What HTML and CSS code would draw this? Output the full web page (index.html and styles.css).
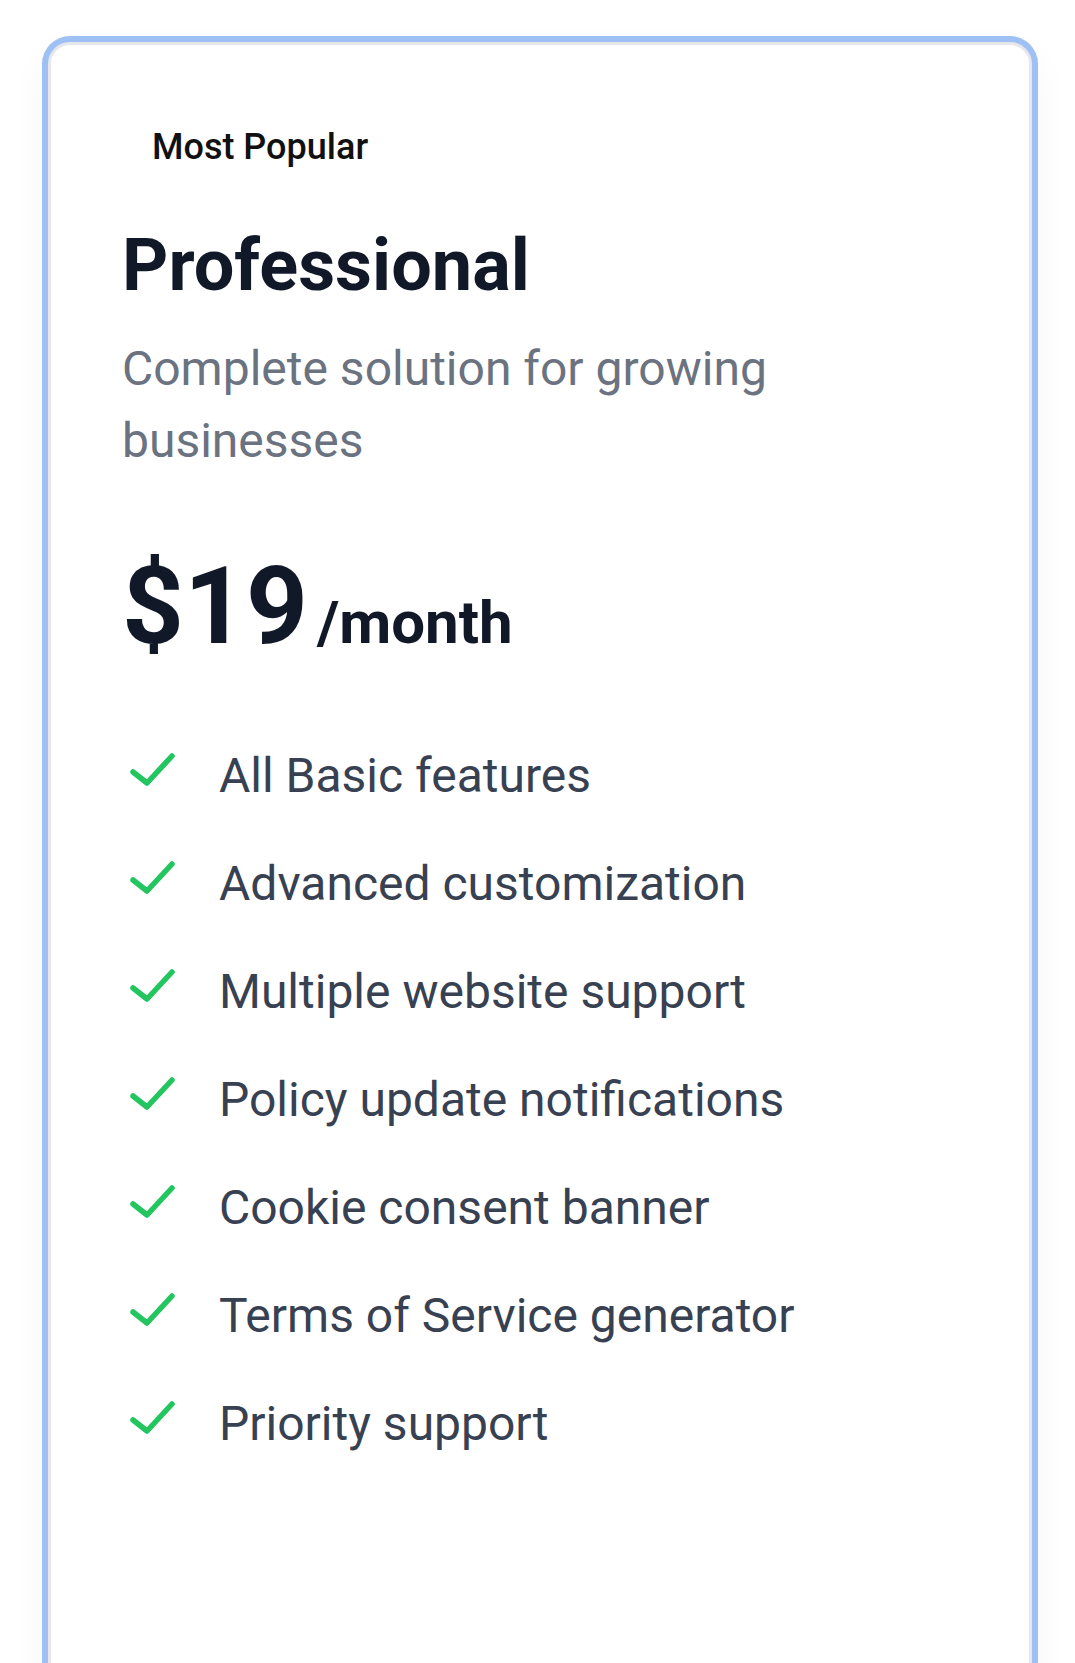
FILE: index.html
```html
<!DOCTYPE html>
<html lang="en">
<head>
<meta charset="utf-8">
<title>Professional plan</title>
<link rel="stylesheet" href="styles.css">
</head>
<body>
<main class="page">
  <section class="card">
    <span class="badge">Most Popular</span>
    <h2 class="plan-name">Professional</h2>
    <p class="plan-desc">Complete solution for growing businesses</p>
    <div class="price">
      <span class="amount">$19</span>
      <span class="period">/month</span>
    </div>
    <ul class="features">
      <li class="feature"><svg class="check" width="50" height="40" viewBox="0 0 50 40"><polyline points="7,22 21,33 46,6" fill="none" stroke="#22c55e" stroke-width="5.5" stroke-linecap="round" stroke-linejoin="round"/></svg><span>All Basic features</span></li>
      <li class="feature"><svg class="check" width="50" height="40" viewBox="0 0 50 40"><polyline points="7,22 21,33 46,6" fill="none" stroke="#22c55e" stroke-width="5.5" stroke-linecap="round" stroke-linejoin="round"/></svg><span>Advanced customization</span></li>
      <li class="feature"><svg class="check" width="50" height="40" viewBox="0 0 50 40"><polyline points="7,22 21,33 46,6" fill="none" stroke="#22c55e" stroke-width="5.5" stroke-linecap="round" stroke-linejoin="round"/></svg><span>Multiple website support</span></li>
      <li class="feature"><svg class="check" width="50" height="40" viewBox="0 0 50 40"><polyline points="7,22 21,33 46,6" fill="none" stroke="#22c55e" stroke-width="5.5" stroke-linecap="round" stroke-linejoin="round"/></svg><span>Policy update notifications</span></li>
      <li class="feature"><svg class="check" width="50" height="40" viewBox="0 0 50 40"><polyline points="7,22 21,33 46,6" fill="none" stroke="#22c55e" stroke-width="5.5" stroke-linecap="round" stroke-linejoin="round"/></svg><span>Cookie consent banner</span></li>
      <li class="feature"><svg class="check" width="50" height="40" viewBox="0 0 50 40"><polyline points="7,22 21,33 46,6" fill="none" stroke="#22c55e" stroke-width="5.5" stroke-linecap="round" stroke-linejoin="round"/></svg><span>Terms of Service generator</span></li>
      <li class="feature"><svg class="check" width="50" height="40" viewBox="0 0 50 40"><polyline points="7,22 21,33 46,6" fill="none" stroke="#22c55e" stroke-width="5.5" stroke-linecap="round" stroke-linejoin="round"/></svg><span>Priority support</span></li>
    </ul>
  </section>
</main>
</body>
</html>
```

FILE: styles.css
```css
html, body {
  margin: 0;
  padding: 0;
  background: #ffffff;
  overflow: hidden;
  height: 1663px;
}

body {
  font-family: Roboto, "Noto Sans", "Liberation Sans", sans-serif;
  color: #111827;
}

.page {
  padding: 42px 43px 0 48px;
}

.card {
  box-sizing: border-box;
  min-height: 1800px;
  background: #ffffff;
  border: 3px solid #e5e7eb;
  border-radius: 22px;
  box-shadow: 0 0 0 6px #9ec0f5, 0 12px 40px rgba(0, 0, 0, 0.05);
  padding: 72px 71px;
  display: flex;
  flex-direction: column;
  align-items: flex-start;
}

.badge {
  display: inline-block;
  padding: 6px 30px 2px;
  font-size: 36px;
  line-height: 48px;
  font-weight: 500;
  color: #111111;
}

.plan-name {
  margin: 53px 0 0;
  font-size: 72px;
  line-height: 80px;
  font-weight: 700;
  color: #111827;
}

.plan-desc {
  margin: 27px 0 0;
  font-size: 48px;
  line-height: 72px;
  font-weight: 400;
  color: #6b7280;
  max-width: 700px;
}

.price {
  margin-top: 75px;
  display: flex;
  align-items: baseline;
  gap: 9px;
}

.amount {
  font-size: 108px;
  line-height: 108px;
  font-weight: 700;
  color: #111827;
}

.period {
  font-size: 60px;
  line-height: 60px;
  font-weight: 700;
  color: #111827;
}

.features {
  list-style: none;
  margin: 86px 0 0;
  padding: 0;
  display: flex;
  flex-direction: column;
  gap: 48px;
}

.feature {
  display: flex;
  align-items: flex-start;
  gap: 43px;
  font-size: 48px;
  line-height: 60px;
  color: #374151;
}

.check {
  flex: none;
  margin: 4px 0 0 4px;
}
```
